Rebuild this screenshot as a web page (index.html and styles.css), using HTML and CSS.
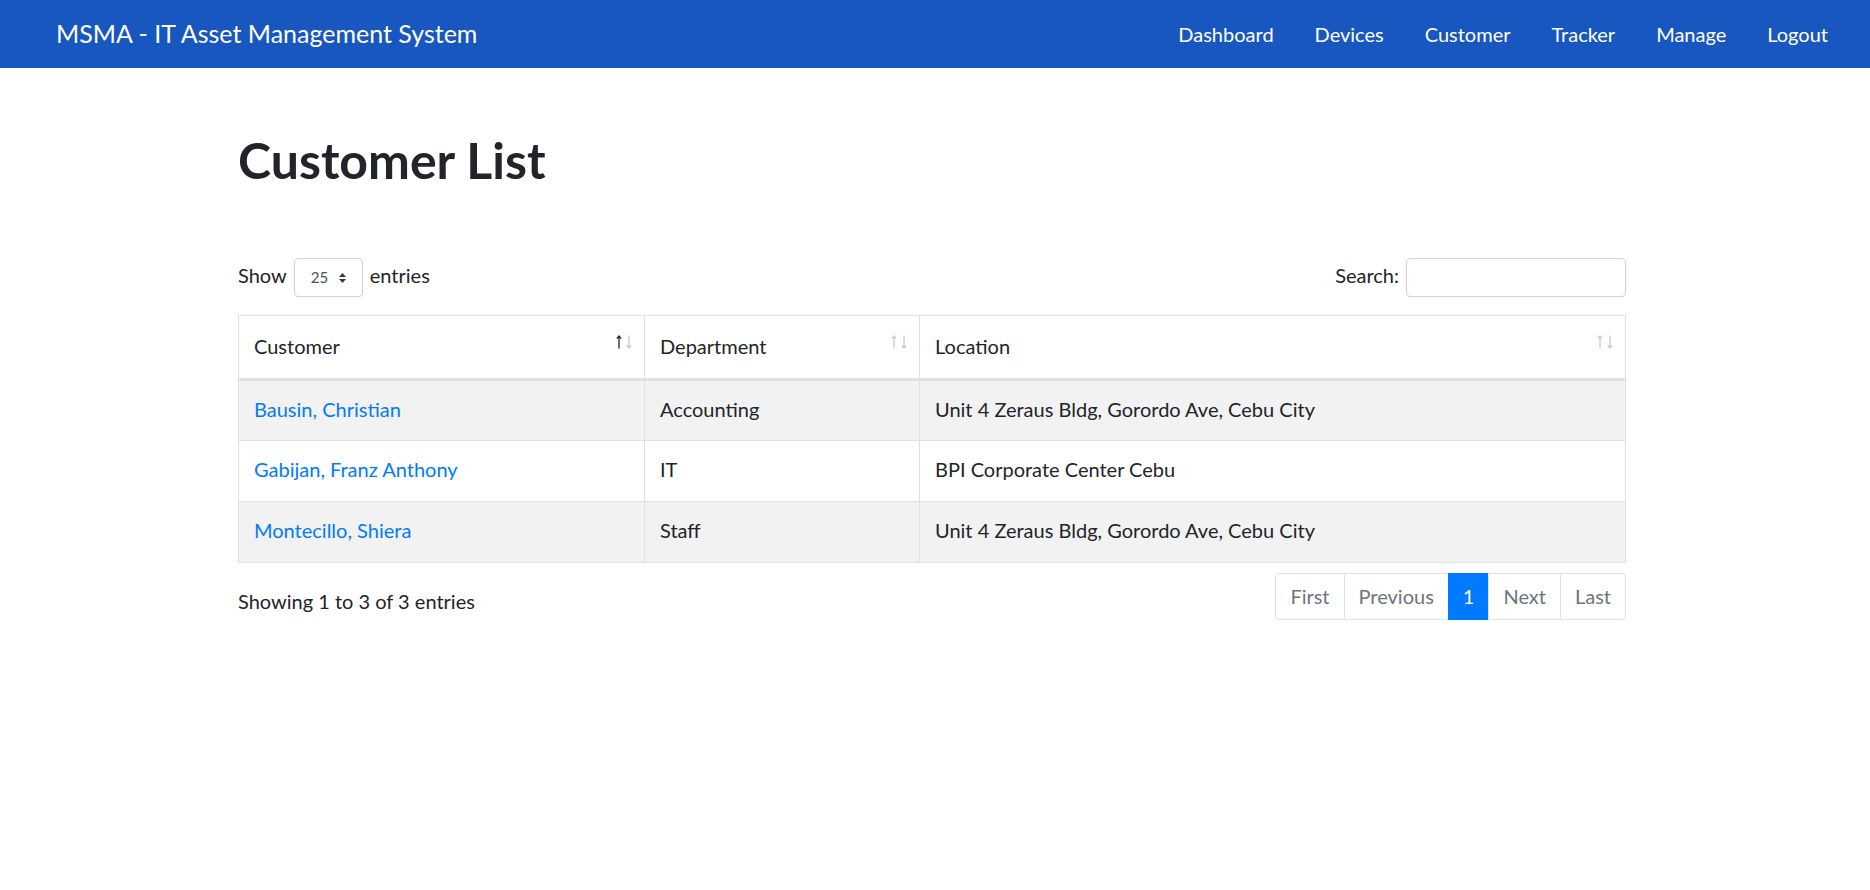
FILE: index.html
```html
<!DOCTYPE html>
<html lang="en">
<head>
<meta charset="utf-8">
<title>Customer List</title>
<link rel="stylesheet" href="styles.css">
</head>
<body>
<nav class="navbar">
  <a class="brand" href="#">MSMA - IT Asset Management System</a>
  <ul class="nav">
    <li><a href="#">Dashboard</a></li>
    <li><a href="#">Devices</a></li>
    <li><a href="#">Customer</a></li>
    <li><a href="#">Tracker</a></li>
    <li><a href="#">Manage</a></li>
    <li><a href="#">Logout</a></li>
  </ul>
</nav>
<main class="container">
  <h1 class="title">Customer List</h1>
  <div class="controls">
    <label class="length"><span class="lbl">Show</span>
      <span class="select">25
        <svg class="caret" width="7" height="10" viewBox="0 0 7 10"><path d="M3.5 0L7 4H0z M3.5 10L0 6h7z" fill="#343a40"/></svg>
      </span>
      <span class="lbl">entries</span></label>
    <label class="search"><span class="lbl">Search:</span> <input type="text"></label>
  </div>
  <table class="table">
    <thead>
      <tr>
        <th class="c1">Customer<svg class="sort" width="17" height="14" viewBox="0 0 17 14"><g fill="none" stroke-width="1.3"><path class="up on" d="M3 13.5V1 M0.8 3.6L3 1 5.2 3.6"/><path class="dn" d="M13 0.5V13 M10.8 10.4L13 13 15.2 10.4"/></g></svg></th>
        <th class="c2">Department<svg class="sort" width="17" height="14" viewBox="0 0 17 14"><g fill="none" stroke-width="1.3"><path class="up" d="M3 13.5V1 M0.8 3.6L3 1 5.2 3.6"/><path class="dn" d="M13 0.5V13 M10.8 10.4L13 13 15.2 10.4"/></g></svg></th>
        <th class="c3">Location<svg class="sort" width="17" height="14" viewBox="0 0 17 14"><g fill="none" stroke-width="1.3"><path class="up" d="M3 13.5V1 M0.8 3.6L3 1 5.2 3.6"/><path class="dn" d="M13 0.5V13 M10.8 10.4L13 13 15.2 10.4"/></g></svg></th>
      </tr>
    </thead>
    <tbody>
      <tr class="odd"><td><a href="#">Bausin, Christian</a></td><td>Accounting</td><td>Unit 4 Zeraus Bldg, Gorordo Ave, Cebu City</td></tr>
      <tr><td><a href="#">Gabijan, Franz Anthony</a></td><td>IT</td><td>BPI Corporate Center Cebu</td></tr>
      <tr class="odd"><td><a href="#">Montecillo, Shiera</a></td><td>Staff</td><td>Unit 4 Zeraus Bldg, Gorordo Ave, Cebu City</td></tr>
    </tbody>
  </table>
  <div class="footer">
    <div class="info">Showing 1 to 3 of 3 entries</div>
    <ul class="pagination">
      <li class="page">First</li>
      <li class="page">Previous</li>
      <li class="page active">1</li>
      <li class="page">Next</li>
      <li class="page">Last</li>
    </ul>
  </div>
</main>
</body>
</html>
```
FILE: styles.css
```css
* { box-sizing: border-box; }
html, body { margin: 0; padding: 0; }
body {
  font-family: "Lato", "Roboto", sans-serif;
  font-size: 20px;
  line-height: 1.5;
  color: #212529;
  background: #fff;
}
a { color: #007bff; text-decoration: none; }

.navbar {
  height: 68px;
  background: #1857bf;
  display: flex;
  align-items: center;
  justify-content: space-between;
  padding: 0 42px 0 56px;
}
.brand { color: #fff; font-size: 25px; }
.nav { list-style: none; margin: 0; padding: 0; display: flex; gap: 41px; }
.nav a { color: #fff; font-size: 20px; }

.container { width: 1388px; margin-left: calc(50% - 697px); }
.title {
  font-size: 50px;
  font-weight: 700;
  line-height: 60px;
  margin: 0;
  padding-top: 62px;
}
.controls {
  display: flex;
  justify-content: space-between;
  align-items: center;
  margin-top: 68px;
  height: 39px;
}
.length, .search { display: flex; align-items: center; gap: 7px; }
.lbl { margin-bottom: 6px; }
.select {
  display: inline-flex;
  align-items: center;
  gap: 11px;
  width: 69px;
  height: 39px;
  padding-left: 16px;
  border: 1px solid #ced4da;
  border-radius: 4px;
  font-size: 15px;
  color: #495057;
}
.search input {
  width: 220px;
  height: 39px;
  border: 1px solid #ced4da;
  border-radius: 4px;
  font: inherit;
}
.table {
  width: 100%;
  border-collapse: collapse;
  margin-top: 18px;
}
.table th, .table td {
  border: 1px solid #dee2e6;
  text-align: left;
  padding: 0 15px 4px;
  height: 61px;
  font-weight: 400;
}
.table thead th {
  height: 64px;
  padding-bottom: 2px;
  border-bottom: 3px solid #dee2e6;
  position: relative;
}
.c1 { width: 406px; }
.c2 { width: 275px; }
.sort { position: absolute; right: 11px; top: 19px; }
.sort path { stroke: #c8cacc; }
.sort path.on { stroke: #212529; }
.odd td { background: #f2f2f2; }

.footer { display: flex; justify-content: space-between; align-items: flex-start; margin-top: 10px; }
.info { padding-top: 13px; }
.pagination { list-style: none; margin: 0; padding: 0; display: flex; }
.page {
  border: 1px solid #dee2e6;
  margin-left: -1px;
  padding: 10px 14px 10px;
  line-height: 25px;
  color: #6c757d;
}
.page:first-child { border-radius: 4px 0 0 4px; }
.page:last-child { border-radius: 0 4px 4px 0; }
.page.active { background: #007bff; border-color: #007bff; color: #fff; }
```
